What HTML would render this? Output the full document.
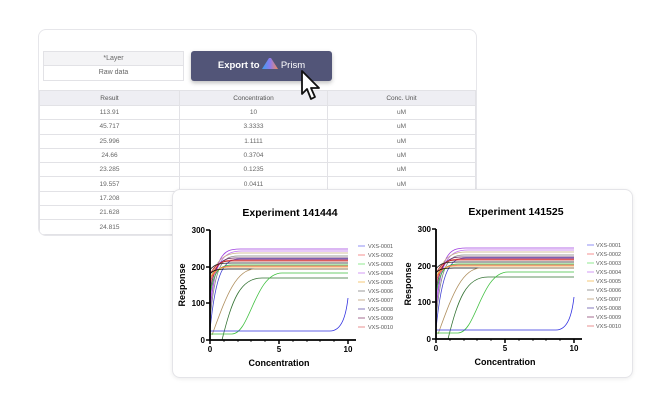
<!DOCTYPE html>
<html><head><meta charset="utf-8"><style>
*{margin:0;padding:0;box-sizing:border-box}
body{width:671px;height:407px;background:#fff;position:relative;overflow:hidden;font-family:"Liberation Sans",sans-serif}
.back{position:absolute;left:38px;top:29px;width:439px;height:207px;border:1px solid #e6e6ea;border-radius:8px;background:#fff;overflow:hidden}
.layer{position:absolute;left:4px;top:21px;width:141px;height:30px;border:1px solid #e2e2e6;font-size:7px;color:#666;text-align:center}
.layer div{height:14px;line-height:14px}
.layer div:first-child{background:#f4f4f6;border-bottom:1px solid #e2e2e6}
.btn{position:absolute;left:152px;top:21px;width:141px;height:30px;background:#525578;border-radius:3px;color:#fff;font-weight:bold;font-size:9.5px;line-height:30px;text-align:center;box-shadow:0 2px 4px rgba(0,0,0,.25)}
table{position:absolute;left:0;top:60px;width:436px;border-collapse:collapse;font-size:6.5px;color:#666;table-layout:fixed}
td,th{border:1px solid #e2e2e6;height:14.3px;text-align:center;font-weight:normal}
th{background:#eeeef3;color:#555;height:15px}
.front{position:absolute;left:172px;top:189px;width:461px;height:189px;border:1px solid #e4e4e8;border-radius:8px;background:#fff;box-shadow:0 1px 4px rgba(0,0,0,.08)}
</style></head><body>
<div class="back">
<div class="layer"><div>*Layer</div><div>Raw data</div></div>
<div class="btn">Export to <svg width="16" height="11" viewBox="0 0 16 11" style="vertical-align:-1px"><defs><linearGradient id="g" x1="0" x2="1"><stop offset="0" stop-color="#3aa0f0"/><stop offset=".5" stop-color="#8a7bf0"/><stop offset="1" stop-color="#f08a5a"/></linearGradient></defs><path d="M0,11 L7,0 L9,0 L16,11 Z" fill="url(#g)"/></svg> <span style="font-weight:normal">Prism</span></div>
<table>
<colgroup><col style="width:140px"><col style="width:148px"><col style="width:148px"></colgroup>
<tr><th>Result</th><th>Concentration</th><th>Conc. Unit</th></tr>
<tr><td>113.91</td><td>10</td><td>uM</td></tr>
<tr><td>45.717</td><td>3.3333</td><td>uM</td></tr>
<tr><td>25.996</td><td>1.1111</td><td>uM</td></tr>
<tr><td>24.66</td><td>0.3704</td><td>uM</td></tr>
<tr><td>23.285</td><td>0.1235</td><td>uM</td></tr>
<tr><td>19.557</td><td>0.0411</td><td>uM</td></tr>
<tr><td>17.208</td><td></td><td></td></tr>
<tr><td>21.628</td><td></td><td></td></tr>
<tr><td>24.815</td><td></td><td></td></tr>
</table>
</div>
<svg style="position:absolute;left:298px;top:68px" width="30" height="38" viewBox="0 0 30 38"><path d="M4,3 L4,26 L9,21 L13,31 L17,29 L13,20 L21,20 Z" fill="#fff" stroke="#111" stroke-width="1.8" stroke-linejoin="round"/></svg>
<div class="front"></div>
<svg style="position:absolute;left:0;top:0" width="671" height="407" font-family="Liberation Sans,sans-serif">
<g transform="translate(210,340)">
<text x="80" y="-124" font-size="10.5" font-weight="bold" text-anchor="middle">Experiment 141444</text>
<g fill="none" stroke-width="0.8">
<path d="M0,-30 C6,-85 12,-91 30,-91 L138,-91" stroke="#a040e0"/>
<path d="M0,-40 C6,-80 14,-89 32,-89 L138,-89" stroke="#c070f0"/>
<path d="M0,-60 C6,-80 14,-87 30,-87 L138,-87" stroke="#c8b080"/>
<path d="M0,-20 C5,-75 12,-84 28,-84 L138,-84" stroke="#808080"/>
<path d="M0,-50 C5,-75 10,-82 25,-82 L138,-82" stroke="#602060"/>
<path d="M0,-10 C6,-70 14,-81 30,-81 L138,-81" stroke="#4040d0"/>
<path d="M0,-55 C4,-75 10,-80 24,-80 L138,-80" stroke="#e02020"/>
<path d="M0,-65 C4,-75 10,-79 22,-79 L138,-79" stroke="#c03030"/>
<path d="M0,-70 C4,-76 10,-77 22,-77 L138,-77" stroke="#202020"/>
<path d="M0,-45 C4,-70 10,-75 22,-75 L138,-75" stroke="#30c030"/>
<path d="M0,-58 C4,-70 10,-74 22,-74 L138,-74" stroke="#f06060"/>
<path d="M0,-62 C4,-70 10,-73 20,-73 L138,-73" stroke="#f0a030"/>
<path d="M0,-66 C3,-70 8,-71 18,-71 L138,-71" stroke="#000"/>
<path d="M2,-5 C15,-40 25,-71 45,-71 L138,-71" stroke="#b09060"/>
<path d="M12,0 C22,-40 30,-62 52,-62 L138,-62" stroke="#307030"/>
<path d="M0,-6 L22,-6 C40,-6 45,-67 72,-67 L138,-67" stroke="#40c040"/>
<path d="M0,-9 L120,-9 C132,-9 136,-25 138,-42" stroke="#3030e0"/>
</g>
<path d="M0,-110 L0,0 L146,0" fill="none" stroke="#000" stroke-width="1.8"/>
<g stroke="#000" stroke-width="1.5"><path d="M-4,-110H0M-4,-73H0M-4,-37H0M-4,0H0M0,0V4M69,0V4M138,0V4"/></g>
<g stroke="#000" stroke-width="0.8"><path d="M14,0V2M28,0V2M41,0V2M55,0V2M83,0V2M97,0V2M110,0V2M124,0V2"/></g>
<g font-size="8" font-weight="bold" text-anchor="end"><text x="-5" y="-107">300</text><text x="-5" y="-70">200</text><text x="-5" y="-34">100</text><text x="-5" y="3">0</text></g>
<g font-size="8" font-weight="bold" text-anchor="middle"><text x="0" y="12">0</text><text x="69" y="12">5</text><text x="138" y="12">10</text><text x="69" y="26" font-size="9">Concentration</text></g>
<text transform="translate(-25,-55) rotate(-90)" font-size="9" font-weight="bold" text-anchor="middle">Response</text>
<g font-size="5.5" fill="#555" stroke-width="0.7">
<path d="M148,-94h7" stroke="#6060f0"/><text x="158" y="-92">VXS-0001</text>
<path d="M148,-85h7" stroke="#f06060"/><text x="158" y="-83">VXS-0002</text>
<path d="M148,-76h7" stroke="#60e060"/><text x="158" y="-74">VXS-0003</text>
<path d="M148,-67h7" stroke="#c070f0"/><text x="158" y="-65">VXS-0004</text>
<path d="M148,-58h7" stroke="#f0b040"/><text x="158" y="-56">VXS-0005</text>
<path d="M148,-49h7" stroke="#707070"/><text x="158" y="-47">VXS-0006</text>
<path d="M148,-40h7" stroke="#b09060"/><text x="158" y="-38">VXS-0007</text>
<path d="M148,-31h7" stroke="#5040a0"/><text x="158" y="-29">VXS-0008</text>
<path d="M148,-22h7" stroke="#803060"/><text x="158" y="-20">VXS-0009</text>
<path d="M148,-13h7" stroke="#e06060"/><text x="158" y="-11">VXS-0010</text>
</g>
</g>
<g transform="translate(436,339)">
<text x="80" y="-124" font-size="10.5" font-weight="bold" text-anchor="middle">Experiment 141525</text>
<g fill="none" stroke-width="0.8">
<path d="M0,-30 C6,-85 12,-91 30,-91 L138,-91" stroke="#a040e0"/>
<path d="M0,-40 C6,-80 14,-89 32,-89 L138,-89" stroke="#c070f0"/>
<path d="M0,-60 C6,-80 14,-87 30,-87 L138,-87" stroke="#c8b080"/>
<path d="M0,-20 C5,-75 12,-84 28,-84 L138,-84" stroke="#808080"/>
<path d="M0,-50 C5,-75 10,-82 25,-82 L138,-82" stroke="#602060"/>
<path d="M0,-10 C6,-70 14,-81 30,-81 L138,-81" stroke="#4040d0"/>
<path d="M0,-55 C4,-75 10,-80 24,-80 L138,-80" stroke="#e02020"/>
<path d="M0,-65 C4,-75 10,-79 22,-79 L138,-79" stroke="#c03030"/>
<path d="M0,-70 C4,-76 10,-77 22,-77 L138,-77" stroke="#202020"/>
<path d="M0,-45 C4,-70 10,-75 22,-75 L138,-75" stroke="#30c030"/>
<path d="M0,-58 C4,-70 10,-74 22,-74 L138,-74" stroke="#f06060"/>
<path d="M0,-62 C4,-70 10,-73 20,-73 L138,-73" stroke="#f0a030"/>
<path d="M0,-66 C3,-70 8,-71 18,-71 L138,-71" stroke="#000"/>
<path d="M2,-5 C15,-40 25,-71 45,-71 L138,-71" stroke="#b09060"/>
<path d="M12,0 C22,-40 30,-62 52,-62 L138,-62" stroke="#307030"/>
<path d="M0,-6 L22,-6 C40,-6 45,-67 72,-67 L138,-67" stroke="#40c040"/>
<path d="M0,-9 L120,-9 C132,-9 136,-25 138,-42" stroke="#3030e0"/>
</g>
<path d="M0,-110 L0,0 L146,0" fill="none" stroke="#000" stroke-width="1.8"/>
<g stroke="#000" stroke-width="1.5"><path d="M-4,-110H0M-4,-73H0M-4,-37H0M-4,0H0M0,0V4M69,0V4M138,0V4"/></g>
<g stroke="#000" stroke-width="0.8"><path d="M14,0V2M28,0V2M41,0V2M55,0V2M83,0V2M97,0V2M110,0V2M124,0V2"/></g>
<g font-size="8" font-weight="bold" text-anchor="end"><text x="-5" y="-107">300</text><text x="-5" y="-70">200</text><text x="-5" y="-34">100</text><text x="-5" y="3">0</text></g>
<g font-size="8" font-weight="bold" text-anchor="middle"><text x="0" y="12">0</text><text x="69" y="12">5</text><text x="138" y="12">10</text><text x="69" y="26" font-size="9">Concentration</text></g>
<text transform="translate(-25,-55) rotate(-90)" font-size="9" font-weight="bold" text-anchor="middle">Response</text>
<g font-size="5.5" fill="#555" stroke-width="0.7">
<path d="M151,-94h7" stroke="#6060f0"/><text x="160" y="-92">VXS-0001</text>
<path d="M151,-85h7" stroke="#f06060"/><text x="160" y="-83">VXS-0002</text>
<path d="M151,-76h7" stroke="#60e060"/><text x="160" y="-74">VXS-0003</text>
<path d="M151,-67h7" stroke="#c070f0"/><text x="160" y="-65">VXS-0004</text>
<path d="M151,-58h7" stroke="#f0b040"/><text x="160" y="-56">VXS-0005</text>
<path d="M151,-49h7" stroke="#707070"/><text x="160" y="-47">VXS-0006</text>
<path d="M151,-40h7" stroke="#b09060"/><text x="160" y="-38">VXS-0007</text>
<path d="M151,-31h7" stroke="#5040a0"/><text x="160" y="-29">VXS-0008</text>
<path d="M151,-22h7" stroke="#803060"/><text x="160" y="-20">VXS-0009</text>
<path d="M151,-13h7" stroke="#e06060"/><text x="160" y="-11">VXS-0010</text>
</g>
</g>
</svg>
</body></html>
